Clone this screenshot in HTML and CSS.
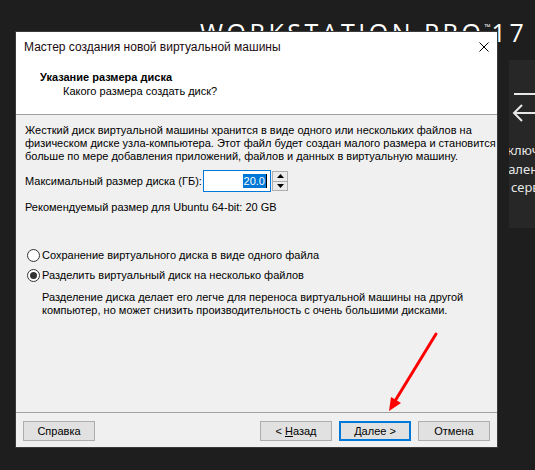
FILE: index.html
```html
<!DOCTYPE html>
<html lang="ru">
<head>
<meta charset="utf-8">
<title>Мастер создания новой виртуальной машины</title>
<link rel="stylesheet" href="styles.css">
</head>
<body>
<div class="desktop">
  <div class="logo">WORKSTATION PRO<span class="tm">™</span>17</div>

  <div class="tile">
    <svg class="tile-icon" width="30" height="40" viewBox="0 0 30 40">
      <path d="M5 1 H30" stroke="#e8e8e8" stroke-width="2" fill="none"/>
      <path d="M5 20 H30 M13 12 L5 20 L13 28" stroke="#e8e8e8" stroke-width="2" fill="none"/>
    </svg>
    <div class="tile-text">
      <div class="tl l1">Подключение</div>
      <div class="tl l2">к удаленному</div>
      <div class="tl l3">серверу</div>
    </div>
  </div>

  <div class="dialog">
    <div class="titlebar">
      <span class="title">Мастер создания новой виртуальной машины</span>
      <svg class="close" width="10" height="10" viewBox="0 0 10 10">
        <path d="M0.5 0.5 L9.5 9.5 M9.5 0.5 L0.5 9.5" stroke="#000" stroke-width="1" fill="none"/>
      </svg>
    </div>
    <div class="header">
      <div class="header-title">Указание размера диска</div>
      <div class="header-sub">Какого размера создать диск?</div>
    </div>
    <div class="content">
      <p class="para">Жесткий диск виртуальной машины хранится в виде одного или нескольких файлов на<br>физическом диске узла-компьютера. Этот файл будет создан малого размера и становится<br>больше по мере добавления приложений, файлов и данных в виртуальную машину.</p>
      <div class="size-row">
        <span class="size-label">Максимальный размер диска (ГБ):</span>
        <div class="numbox"><span class="sel">20.0</span><span class="caret"></span></div>
        <div class="spin">
          <div class="spin-btn"><svg width="7" height="4" viewBox="0 0 7 4"><path d="M3.5 0 L7 4 H0 Z" fill="#000"/></svg></div>
          <div class="spin-btn"><svg width="7" height="4" viewBox="0 0 7 4"><path d="M0 0 H7 L3.5 4 Z" fill="#000"/></svg></div>
        </div>
      </div>
      <p class="recommend">Рекомендуемый размер для Ubuntu 64-bit: 20 GB</p>

      <div class="radio-row first">
        <span class="radio"></span>
        <span class="radio-label">Сохранение виртуального диска в виде одного файла</span>
      </div>
      <div class="radio-row">
        <span class="radio checked"></span>
        <span class="radio-label">Разделить виртуальный диск на несколько файлов</span>
      </div>
      <p class="desc">Разделение диска делает его легче для переноса виртуальной машины на другой<br>компьютер, но может снизить производительность с очень большими дисками.</p>
    </div>
    <div class="footer">
      <button class="btn">Справка</button>
      <div class="spacer"></div>
      <button class="btn">&lt; <u>Н</u>азад</button>
      <button class="btn default"><u>Д</u>алее &gt;</button>
      <button class="btn">Отмена</button>
    </div>
  </div>

  <svg class="arrow" width="535" height="470" viewBox="0 0 535 470">
    <path d="M436 334 L395 401" stroke="#ff0000" stroke-width="3" stroke-linecap="round" fill="none"/>
    <path d="M389 411 L391 397 L401 403 Z" fill="#ff0000"/>
  </svg>
</div>
</body>
</html>
```

FILE: styles.css
```css
* { box-sizing: border-box; }
html, body {
  margin: 0;
  padding: 0;
  width: 535px;
  height: 470px;
  overflow: hidden;
  background: #1e1e1e;
}
.desktop {
  position: relative;
  width: 535px;
  height: 470px;
  overflow: hidden;
  background: #1e1e1e;
}
.logo {
  position: absolute;
  left: 200px;
  top: 12px;
  font-family: "Open Sans", sans-serif;
  font-size: 25px;
  line-height: 30px;
  font-weight: 400;
  letter-spacing: 3.5px;
  color: #ffffff;
  white-space: nowrap;
}
.logo .tm {
  font-size: 8px;
  letter-spacing: 0;
  vertical-align: 12px;
  margin-right: 1px;
}
.tile {
  position: absolute;
  left: 509px;
  top: 60px;
  width: 140px;
  height: 168px;
  background: #272727;
  overflow: hidden;
}
.tile-icon {
  position: absolute;
  left: 0;
  top: 33px;
}
.tile-text {
  position: absolute;
  left: 2px;
  top: 81px;
  width: 140px;
  font-family: "Noto Sans", sans-serif;
  font-size: 13px;
  line-height: 18.5px;
  color: #e6e6e6;
  white-space: nowrap;
}
.tl.l1 { margin-left: -29px; }
.tl.l2 { margin-left: -27px; }
.tl.l3 { margin-left: 0; }
.dialog {
  position: absolute;
  left: 16px;
  top: 32px;
  width: 481px;
  height: 415px;
  display: flex;
  flex-direction: column;
  background: #f0f0f0;
  font-family: "Liberation Sans", Arial, sans-serif;
  font-size: 11px;
  color: #000;
  box-shadow: 0 0 0 1px #3a3a3a;
}
.titlebar {
  height: 30px;
  background: #ffffff;
  display: flex;
  align-items: center;
  padding: 0 7px 0 8px;
}
.title {
  flex: 1;
  font-size: 12px;
  color: #1a0a10;
}
.close { margin-right: 1px; }
.header {
  height: 53px;
  background: #ffffff;
  border-bottom: 1px solid #a0a0a0;
  padding: 8px 0 0 24px;
}
.header-title {
  font-weight: bold;
  line-height: 14px;
}
.header-sub {
  line-height: 14px;
  padding-left: 23px;
}
.content {
  flex: 1;
  padding: 9px 8px 0 9px;
}
.para {
  margin: 0;
  line-height: 13px;
  white-space: nowrap;
}
.size-row {
  display: flex;
  align-items: center;
  margin-top: 7px;
  height: 22px;
}
.size-label {
  width: 178px;
  white-space: nowrap;
}
.numbox {
  width: 68px;
  height: 22px;
  border: 1px solid #0078d7;
  background: #ffffff;
  display: flex;
  align-items: center;
  justify-content: flex-end;
  padding-right: 3px;
}
.sel {
  background: #0078d7;
  color: #ffffff;
  line-height: 14px;
  padding: 0 1px;
}
.caret {
  width: 1px;
  height: 14px;
  background: #000;
}
.spin {
  margin-left: 1px;
  width: 16px;
  height: 20px;
  display: flex;
  flex-direction: column;
  border: 1px solid #adadad;
  background: #adadad;
  gap: 1px;
}
.spin-btn {
  flex: 1;
  display: flex;
  align-items: center;
  justify-content: center;
  background: #eaeaea;
}
.recommend {
  margin: 9px 0 0;
  line-height: 13px;
}
.radio-row {
  display: flex;
  align-items: center;
  height: 20px;
  margin-left: 2px;
}
.radio-row.first { margin-top: 31px; }
.radio {
  width: 13px;
  height: 13px;
  border-radius: 50%;
  border: 1px solid #333333;
  background: #ffffff;
  margin-right: 2px;
  display: flex;
  align-items: center;
  justify-content: center;
}
.radio.checked::after {
  content: "";
  width: 7px;
  height: 7px;
  border-radius: 50%;
  background: #333333;
}
.desc {
  margin: 6px 0 0 17px;
  line-height: 13px;
  white-space: nowrap;
}
.footer {
  border-top: 1px solid #a0a0a0;
  padding: 8px 7px 6px 7px;
  display: flex;
  gap: 7px;
}
.spacer { flex: 1; }
.btn {
  width: 72px;
  height: 20px;
  border: 1px solid #adadad;
  background: #e1e1e1;
  font-family: inherit;
  font-size: 11px;
  color: #000;
  padding: 0;
  line-height: 18px;
}
.btn.default {
  border: 2px solid #0078d7;
  line-height: 16px;
}
.btn u { text-decoration: underline; text-underline-offset: 1px; }
.arrow {
  position: absolute;
  left: 0;
  top: 0;
  pointer-events: none;
}
```
